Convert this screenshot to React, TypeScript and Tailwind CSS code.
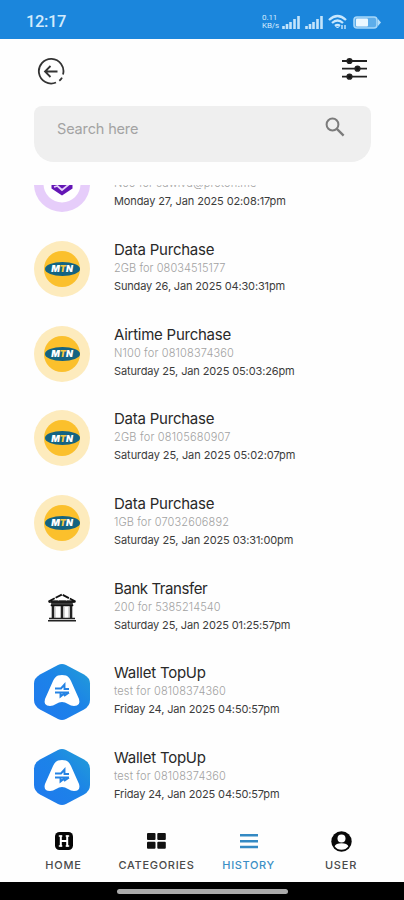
import React from 'react';

interface Transaction {
  kind: 'crypto' | 'mtn' | 'bank' | 'wallet';
  title: string;
  details: string;
  date: string;
  titleSpacing: string;
  detailsSpacing: string;
  dateSpacing: string;
}

const transactions: Transaction[] = [
  { kind: 'crypto', title: '', details: 'N99 for sdwivd@proton.me', date: 'Monday 27, Jan 2025 02:08:17pm', titleSpacing: 'tracking-normal', detailsSpacing: 'tracking-[0.06px]', dateSpacing: 'tracking-[-0.12px]' },
  { kind: 'mtn', title: 'Data Purchase', details: '2GB for 08034515177', date: 'Sunday 26, Jan 2025 04:30:31pm', titleSpacing: 'tracking-[-0.23px]', detailsSpacing: 'tracking-[0.06px]', dateSpacing: 'tracking-[-0.15px]' },
  { kind: 'mtn', title: 'Airtime Purchase', details: 'N100 for 08108374360', date: 'Saturday 25, Jan 2025 05:03:26pm', titleSpacing: 'tracking-[-0.25px]', detailsSpacing: 'tracking-[0.15px]', dateSpacing: 'tracking-[-0.12px]' },
  { kind: 'mtn', title: 'Data Purchase', details: '2GB for 08105680907', date: 'Saturday 25, Jan 2025 05:02:07pm', titleSpacing: 'tracking-[-0.23px]', detailsSpacing: 'tracking-[0.2px]', dateSpacing: 'tracking-[-0.06px]' },
  { kind: 'mtn', title: 'Data Purchase', details: '1GB for 07032606892', date: 'Saturday 25, Jan 2025 03:31:00pm', titleSpacing: 'tracking-[-0.23px]', detailsSpacing: 'tracking-[0.12px]', dateSpacing: 'tracking-[-0.1px]' },
  { kind: 'bank', title: 'Bank Transfer', details: '200 for 5385214540', date: 'Saturday 25, Jan 2025 01:25:57pm', titleSpacing: 'tracking-[-0.42px]', detailsSpacing: 'tracking-[0.08px]', dateSpacing: 'tracking-[-0.14px]' },
  { kind: 'wallet', title: 'Wallet TopUp', details: 'test for 08108374360', date: 'Friday 24, Jan 2025 04:50:57pm', titleSpacing: 'tracking-[-0.24px]', detailsSpacing: 'tracking-[0.14px]', dateSpacing: 'tracking-[-0.14px]' },
  { kind: 'wallet', title: 'Wallet TopUp', details: 'test for 08108374360', date: 'Friday 24, Jan 2025 04:50:57pm', titleSpacing: 'tracking-[-0.24px]', detailsSpacing: 'tracking-[0.14px]', dateSpacing: 'tracking-[-0.14px]' },
];

const MtnLogo = () => (
  <div className="w-14 h-14 rounded-full bg-[#fdebbd] flex items-center justify-center">
    <div className="w-9 h-9 rounded-full bg-[#fbc02c] flex items-center justify-center">
      <div className="w-[35px] h-[14px] shrink-0 rounded-[50%] bg-[#146381] flex items-center justify-center text-[9px] leading-none font-black italic text-white">
        M<span className="text-[#f5c842]">T</span>N
      </div>
    </div>
  </div>
);

const CryptoLogo = () => (
  <svg width="56" height="56" viewBox="0 0 56 56">
    <circle cx="28" cy="28" r="28" fill="#e6cdfa" />
    <circle cx="28" cy="28" r="18.500" fill="#fff" />
    <path d="M17.500 18h21v14.500L28 39.500l-10.500-7z" fill="#6416b5" />
    <path d="M20 31l3.500-1 4.500 4 8-6.500" fill="none" stroke="#e6d2fb" strokeWidth="1.800" />
  </svg>
);

const BankLogo = () => (
  <svg width="56" height="56" viewBox="0 0 56 56">
    <path d="M14.500 21.500 28 14.500l13.500 7z" fill="#fff" stroke="#111" strokeWidth="1.800" strokeDasharray="7 1" />
    <path d="M18 20.500h20l1.500 5.500h-23z" fill="#3c3c3c" />
    <path d="M15 22h26M17 25.500h22" stroke="#111" strokeWidth="1.500" />
    <path d="M19 26v12M28 26v12M37 26v12" stroke="#222" strokeWidth="2.600" />
    <path d="M21.500 27v11M30.500 27v11M34.500 27v11" stroke="#bbb" strokeWidth=".6" />
    <path d="M15 38.500h26M14 40.800h28" stroke="#222" strokeWidth="1.500" />
  </svg>
);

const WalletLogo = () => (
  <svg className="shrink-0" width="58" height="58" viewBox="0 0 58 58">
    <defs>
      <linearGradient id="walletBlue" x1="0" y1="1" x2="1" y2="0">
        <stop offset="0" stopColor="#2079ef" />
        <stop offset=".55" stopColor="#1c83e8" />
        <stop offset="1" stopColor="#229fd6" />
      </linearGradient>
    </defs>
    <path d="M25 2q4-2 8 0l18 9.500q6 3.500 6 9V37q0 6-6 9.500L33 56q-4 2-8 0L7 46.500Q1 43 1 37V20.500q0-5.500 6-9z" fill="url(#walletBlue)" />
    <path d="M25 12.500q4-1 8 0 3 1 5 5.500l8 18q2 7-5 7-3 0-6-2-6-4-12 0-3 2-6 2-7 0-5-7l8-18q2-4.500 5-5.500z" fill="#fff" />
    <path d="M22 25.500h6l3.500-4v4.500H36M22 29.500h14M22 29.500l5.500 0 0 4 5-4M31 33l5-3.500" fill="none" stroke="#2583e4" strokeWidth="1.900" />
  </svg>
);

const logos = {
  crypto: <CryptoLogo />,
  mtn: <MtnLogo />,
  bank: <BankLogo />,
  wallet: <WalletLogo />,
};

const TransactionRow: React.FC<{ item: Transaction }> = ({ item }) => (
  <div className="h-[84.660px] shrink-0 flex items-center gap-[23px] whitespace-nowrap">
    <div className="w-14 flex justify-center shrink-0">
      {logos[item.kind]}
    </div>
    <div className="pl-[1px] pb-[2px]">
      <div className={`h-5 text-[15px] leading-5 text-[#292929] ${item.titleSpacing}`}>{item.title}</div>
      <div className={`text-[11px] leading-[17px] font-light text-[#a2a2a2] ${item.detailsSpacing}`}>{item.details}</div>
      <div className={`text-[11px] leading-[19px] text-[#3c3c3c] ${item.dateSpacing}`}>{item.date}</div>
    </div>
  </div>
);

const SignalIcon = () => (
  <svg width="19" height="13" viewBox="0 0 19 13" stroke="#c4e4fb" strokeWidth="2.600">
    <path d="M1.500 10v3M5 8v5M8.500 6v7M12.500 3v10M16.500 0v13" />
  </svg>
);

const StatusBar = () => (
  <div className="h-[39px] shrink-0 bg-[#1b86dc] flex items-center justify-between pl-[26px] pr-[23px] pt-[5px] text-[#d3ebfc]">
    <span className="font-['Roboto'] text-[16.500px] leading-none font-medium tracking-[-0.4px]">12:17</span>
    <div className="flex items-center">
      <div className="w-[20px] font-['Roboto'] text-[8px] leading-[8px] tracking-[-0.1px]">
        <div>0.11</div>
        <div>KB/s</div>
      </div>
      <div className="flex gap-1">
        <SignalIcon />
        <SignalIcon />
      </div>
      <svg className="ml-1" width="20" height="16" viewBox="0 0 20 16" fill="none" stroke="#c8e7fd" strokeWidth="2.300">
        <path d="M1 6Q9.500-2 18 6M4 9q5.500-5 11 0M7 12q2.500-2 5 0" />
        <path d="M9.500 13v1" />
        <path d="M14 11v4M17 11v4" strokeWidth="1.400" />
      </svg>
      <svg className="ml-[5px]" width="28" height="13" viewBox="0 0 28 13">
        <rect x="1" y="1" width="23" height="11" rx="3" fill="#5dadea" stroke="#a7d7f9" strokeWidth="1.600" />
        <rect x="3" y="2.500" width="12" height="8" rx="1" fill="#ecf8ff" />
        <path d="M25 3l3 3.500-3 3.500z" fill="#b5defa" />
      </svg>
    </div>
  </div>
);

const Header = () => (
  <div className="h-[67px] shrink-0 flex items-start justify-between pl-[37px] pr-[36px] pt-[18px]">
    <svg width="28" height="28" viewBox="0 0 28 28" fill="none" stroke="#333" strokeWidth="1.800">
      <path d="M19 25.500A12.300 12.300 0 1 1 26 17.500M22.300 23.800q1.700-1.300 2.700-3.200" />
      <path d="M20.500 14.500H8.500M13.500 9 8 14.500l5.500 5.500" />
    </svg>
    <svg width="27" height="24" viewBox="0 0 27 24" stroke="#222" strokeWidth="1.800" fill="#111">
      <path d="M1 4h25M1 11.700h25M1 19.700h25" />
      <circle cx="8.500" cy="4" r="2.200" />
      <circle cx="16.500" cy="11.700" r="2.200" />
      <circle cx="8.500" cy="19.700" r="2.200" />
    </svg>
  </div>
);

const SearchBox = () => (
  <div className="h-14 shrink-0 ml-[34px] mr-[33px] pl-[23px] pr-[26px] flex items-start justify-between bg-[#efefef] rounded-t-[8px] rounded-b-[20px]">
    <span className="mt-[14px] text-[14.500px] leading-[18px] tracking-[-0.15px] text-[#a3a3a3]">Search here</span>
    <svg className="mt-[11px]" width="20" height="20" viewBox="0 0 20 20" fill="none" stroke="#7b7b7b" strokeWidth="2">
      <circle cx="7.500" cy="7.500" r="5.900" />
      <path d="m11.600 11.600 7 7" strokeWidth="2.300" />
    </svg>
  </div>
);

const BottomNav = () => (
  <nav className="h-[62px] shrink-0 grid grid-cols-[103px_83px_101px_84px] pl-[12px] text-[11px] font-medium text-[#4a4a4a]">
    <div className="flex flex-col items-center">
      <svg className="mt-3" width="18" height="18" viewBox="0 0 18 18">
        <rect width="18" height="18" rx="4.500" fill="#050505" />
        <path d="M5.800 3.500v11M12.200 3.500v11M5.800 9h6.400" stroke="#fff" strokeWidth="2" />
        <path d="M3.800 4h3.500M10.700 4h3.500M3.800 14h3.500M10.700 14h3.500" stroke="#fff" strokeWidth="1.300" />
      </svg>
      <span className="mt-[7px] leading-4 tracking-[0.8px]">HOME</span>
    </div>
    <div className="flex flex-col items-center">
      <svg className="mt-3" width="19" height="18" viewBox="0 0 19 18" fill="#111">
        <rect x="0" y="1" width="8.500" height="7" rx="1" />
        <rect x="10.300" y="1" width="8.500" height="7" rx="1" />
        <rect x="0" y="9.700" width="8.500" height="7" rx="1" />
        <rect x="10.300" y="9.700" width="8.500" height="7" rx="1" />
      </svg>
      <span className="mt-[7px] leading-4 tracking-[0.7px]">CATEGORIES</span>
    </div>
    <div className="flex flex-col items-center text-[#3b8fc5]">
      <svg className="mt-3" width="18" height="18" viewBox="0 0 18 18" stroke="#3489c3" strokeWidth="2.500">
        <path d="M0 3.300h18M0 9.300h18M0 15h18" />
      </svg>
      <span className="mt-[7px] leading-4 tracking-[0.6px]">HISTORY</span>
    </div>
    <div className="flex flex-col items-center">
      <svg className="mt-[11px]" width="21" height="21" viewBox="0 0 21 21">
        <circle cx="10.500" cy="10.500" r="10.200" fill="#090909" />
        <circle cx="10.500" cy="7.500" r="4" fill="#fff" />
        <path d="M3.600 15.300q1.200-3 6.900-3t6.900 3q-2.500 3.500-6.900 3.500t-6.900-3.500z" fill="#fff" />
      </svg>
      <span className="mt-[5px] leading-4 tracking-[0.8px]">USER</span>
    </div>
  </nav>
);

export default function App() {
  return (
    <div className="w-[404px] h-[900px] flex flex-col overflow-hidden bg-[#fefefe] font-['Inter','Noto_Sans',sans-serif]">
      <StatusBar />
      <Header />
      <SearchBox />
      <div className="mt-[23px] h-[635px] shrink-0 overflow-hidden pl-[34px]">
        <div className="flex flex-col -mt-[43px]">
          {transactions.map((item, index) => (
            <TransactionRow key={index} item={item} />
          ))}
        </div>
      </div>
      <BottomNav />
      <div className="h-[18px] shrink-0 bg-black flex justify-center pt-[7px]">
        <div className="w-[171px] h-[5px] rounded-full bg-[#aaa]" />
      </div>
    </div>
  );
}
